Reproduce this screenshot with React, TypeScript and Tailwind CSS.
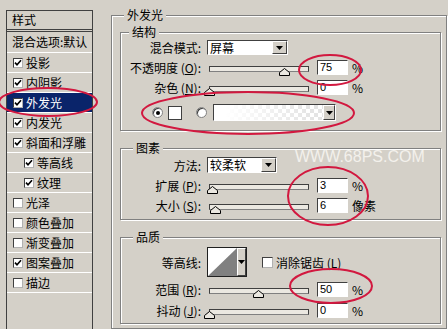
import React from "react";

const items: { t: string; c: boolean; sel?: boolean; ind?: boolean }[] = [
  { t: "投影", c: true },
  { t: "内阴影", c: true },
  { t: "外发光", c: true, sel: true },
  { t: "内发光", c: true },
  { t: "斜面和浮雕", c: true },
  { t: "等高线", c: true, ind: true },
  { t: "纹理", c: true, ind: true },
  { t: "光泽", c: false },
  { t: "颜色叠加", c: false },
  { t: "渐变叠加", c: false },
  { t: "图案叠加", c: true },
  { t: "描边", c: false },
];

const Check = () => (
  <svg width="8" height="8" viewBox="0 0 8 8">
    <path d="M1 3.6 L3 5.8 L7 1.2" fill="none" stroke="#000" strokeWidth="1.6" />
  </svg>
);

function Box({ checked, size = "w-[10px] h-[10px]" }: { checked: boolean; size?: string }) {
  return (
    <span
      className={`${size} bg-white border border-t-[#404040] border-l-[#404040] border-r-[#b0b0b0] border-b-[#b0b0b0] flex items-center justify-center shrink-0`}
    >
      {checked && <Check />}
    </span>
  );
}

const Arrow = () => (
  <svg width="7" height="4" viewBox="0 0 7 4">
    <path d="M0 0 H7 L3.5 4 Z" fill="#000" />
  </svg>
);

function DropBtn({ w = "w-[15px]" }: { w?: string }) {
  return (
    <span className={`${w} h-full bg-[#d4d0c8] border border-t-white border-l-white border-r-[#404040] border-b-[#404040] flex items-center justify-center shrink-0`}>
      <Arrow />
    </span>
  );
}

function Select({ text, w }: { text: string; w: string }) {
  return (
    <div className={`${w} h-full ml-[6px] bg-white border border-t-[#404040] border-l-[#404040] border-b-white border-r-white flex items-stretch shrink-0`}>
      <span className="flex-1 pl-[2px] flex items-center leading-[14px]">{text}</span>
      <DropBtn />
    </div>
  );
}

function Lbl({ children }: { children: React.ReactNode }) {
  return <span className="w-[80px] text-right shrink-0 whitespace-nowrap leading-[15px]">{children}</span>;
}

const U = ({ k }: { k: string }) => (
  <>
    {" "}(<span className="underline">{k}</span>):
  </>
);

function Slider({ v }: { v: number }) {
  return (
    <div className="relative w-[100px] h-[15px] ml-[8px] flex flex-col shrink-0">
      <div className="mt-[6px] h-[6px] border border-[#404040] border-b-[#808080] bg-[#ebe8e1]" />
      <svg className="absolute top-[8px]" style={{ left: v - 5 }} width="11" height="8" viewBox="0 0 11 8">
        <path d="M5.5 0.5 L10.5 4.5 V7.5 H0.5 V4.5 Z" fill="#ebe8e1" stroke="#000" />
      </svg>
    </div>
  );
}

function Num({ v }: { v: string }) {
  return (
    <span className="w-[31px] h-[15px] ml-[8px] bg-white border border-t-[#404040] border-l-[#404040] border-b-white border-r-white pl-[2px] flex items-center font-['Liberation_Sans',sans-serif] text-[11px] leading-[13px] shrink-0">
      {v}
    </span>
  );
}

function Unit({ t }: { t: string }) {
  return <span className="ml-[4px] leading-[15px] whitespace-nowrap">{t}</span>;
}

function SliderRow({ label, v, n, unit, mt }: { label: React.ReactNode; v: number; n: string; unit: string; mt: string }) {
  return (
    <div className={`${mt} h-[15px] flex items-center`}>
      <Lbl>{label}</Lbl>
      <Slider v={v} />
      <Num v={n} />
      <Unit t={unit} />
    </div>
  );
}

const Radio = ({ on }: { on: boolean }) => (
  <span className="w-[11px] h-[11px] rounded-full bg-white border border-[#808080] shadow-[inset_1px_1px_0_#404040] flex items-center justify-center shrink-0">
    {on && <span className="w-[4px] h-[4px] rounded-full bg-black" />}
  </span>
);

const groupCls = "border border-[#808080] shadow-[inset_1px_1px_0_#fff,1px_1px_0_#fff] m-0 p-0";
const legendCls = "px-[3px] leading-[16px] bg-[#d4d0c8]";

export default function App() {
  return (
    <div className="w-[448px] h-[329px] bg-[#d4d0c8] relative overflow-hidden flex items-start font-['Noto_Sans_CJK_SC',sans-serif] text-[12px] text-black">
      {/* left list */}
      <div className="ml-[6px] mt-[10px] w-[87px] h-[330px] border border-[#404040] flex flex-col shrink-0">
        <div className="h-[21px] border-b-[3px] border-double border-[#404040] pl-[5px] flex items-center leading-[16px]">样式</div>
        <div className="h-[21px] border-b border-white pl-[5px] flex items-center leading-[16px] whitespace-nowrap">混合选项:默认</div>
        {items.map((it) => (
          <div
            key={it.t}
            className={`h-[20px] border-b border-white flex items-center gap-[3px] leading-[16px] whitespace-nowrap ${it.ind ? "pl-[17px]" : "pl-[6px]"} ${it.sel ? "bg-[#0a246a] text-white" : ""}`}
          >
            <Box checked={it.c} />
            <span>{it.t}</span>
          </div>
        ))}
      </div>

      {/* right */}
      <fieldset className={`${groupCls} ml-[18px] mt-[7px] w-[336px] h-[322px] shrink-0`}>
        <legend className={`${legendCls} ml-[12px]`}>外发光</legend>

        {/* 结构 */}
        <fieldset className={`${groupCls} ml-[8px] mt-[1px] w-[321px] h-[107px]`}>
          <legend className={`${legendCls} ml-[8px]`}>结构</legend>
          <div className="h-[15px] flex items-center">
            <Lbl>混合模式:</Lbl>
            <Select text="屏幕" w="w-[81px]" />
          </div>
          <SliderRow mt="mt-[5px]" label={<>不透明度<U k="O" /></>} v={75} n="75" unit="%" />
          <SliderRow mt="mt-[5px]" label={<>杂色<U k="N" /></>} v={0} n="0" unit="%" />
          <div className="mt-[9px] h-[17px] flex items-center">
            <span className="ml-[31px]"><Radio on /></span>
            <span className="ml-[5px] w-[14px] h-[14px] bg-white border border-[#404040] shrink-0" />
            <span className="ml-[14px]"><Radio on={false} /></span>
            <div className="ml-[6px] w-[123px] h-[17px] border border-t-[#404040] border-l-[#404040] border-b-white border-r-white flex items-stretch">
              <span className="flex-1 bg-[linear-gradient(to_right,#fff_10%,rgba(255,255,255,0)_90%),repeating-conic-gradient(#e4e4e4_0_25%,#fff_0_50%)] [background-size:100%_100%,8px_8px]" />
              <DropBtn w="w-[12px]" />
            </div>
          </div>
        </fieldset>

        {/* 图素 */}
        <fieldset className={`${groupCls} ml-[8px] mt-[9px] w-[321px] h-[80px]`}>
          <legend className={`${legendCls} ml-[12px]`}>图素</legend>
          <div className="mt-[1px] h-[16px] flex items-center">
            <Lbl>方法:</Lbl>
            <Select text="较柔软" w="w-[70px]" />
          </div>
          <SliderRow mt="mt-[5px]" label={<>扩展<U k="P" /></>} v={3} n="3" unit="%" />
          <SliderRow mt="mt-[5px]" label={<>大小<U k="S" /></>} v={6} n="6" unit="像素" />
        </fieldset>

        {/* 品质 */}
        <fieldset className={`${groupCls} ml-[8px] mt-[9px] w-[321px] h-[95px]`}>
          <legend className={`${legendCls} ml-[12px]`}>品质</legend>
          <div className="mt-[2px] h-[30px] flex items-center">
            <Lbl>等高线:</Lbl>
            <div className="ml-[6px] w-[40px] h-[30px] border border-[#202020] flex items-stretch shrink-0">
              <svg width="29" height="28" viewBox="0 0 29 28" className="shrink-0 bg-white">
                <path d="M0 28 L29 0 V28 Z" fill="#808080" />
              </svg>
              <DropBtn w="w-[9px]" />
            </div>
            <span className="ml-[15px]"><Box checked={false} size="w-[11px] h-[11px]" /></span>
            <span className="ml-[3px] leading-[15px] whitespace-nowrap">消除锯齿 (<span className="underline">L</span>)</span>
          </div>
          <SliderRow mt="mt-[5px]" label={<>范围<U k="R" /></>} v={49} n="50" unit="%" />
          <SliderRow mt="mt-[6px]" label={<>抖动<U k="J" /></>} v={0} n="0" unit="%" />
        </fieldset>
      </fieldset>

      {/* watermark */}
      <span className="absolute left-[295px] top-[149px] font-['Liberation_Sans',sans-serif] text-[16px] leading-[16px] text-[#f3f1ec] whitespace-nowrap">
        WWW.68PS.COM
      </span>

      {/* red annotation ellipses */}
      <svg className="absolute inset-0 pointer-events-none" width="448" height="329">
        <g fill="none" stroke="#d2183f" strokeWidth="2">
          <ellipse cx="48" cy="102" rx="49" ry="14" />
          <ellipse cx="330" cy="70" rx="31" ry="15" />
          <ellipse cx="248" cy="113" rx="106" ry="21" />
          <ellipse cx="328" cy="196" rx="40" ry="29" />
          <ellipse cx="331" cy="286" rx="41" ry="17" />
        </g>
      </svg>
    </div>
  );
}
